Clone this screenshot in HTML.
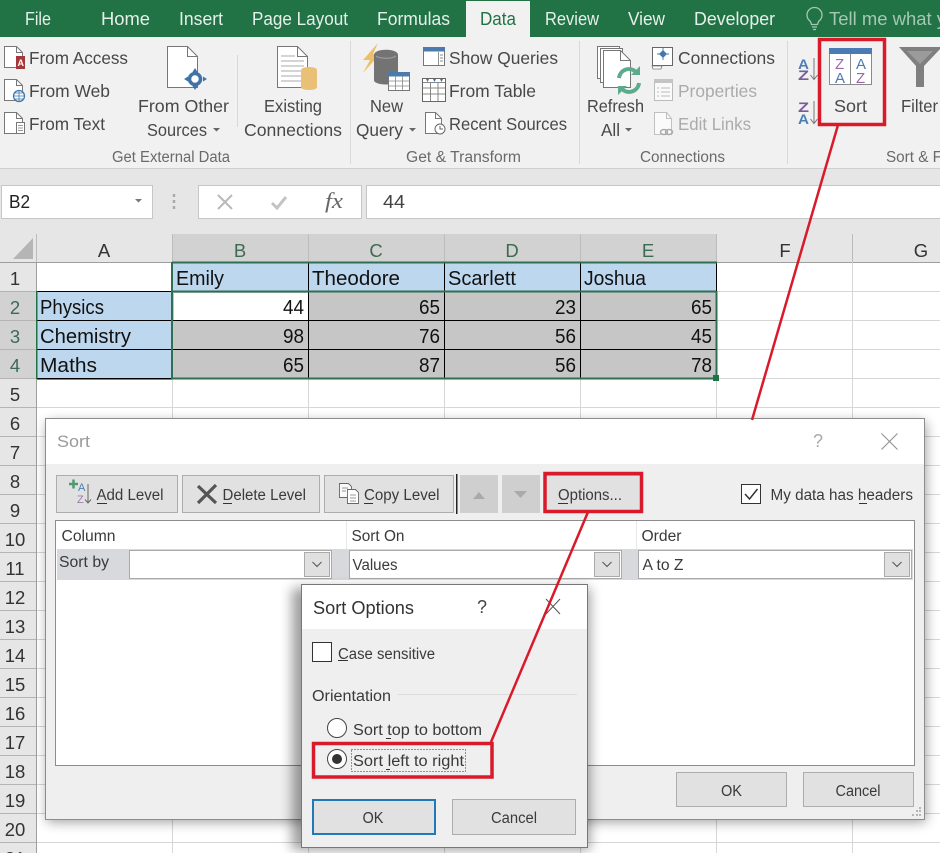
<!DOCTYPE html>
<html><head><meta charset="utf-8"><title>Excel Sort</title>
<style>
html,body{margin:0;padding:0;width:940px;height:853px;overflow:hidden;background:#fff}
svg{display:block;font-family:"Liberation Sans",sans-serif}
.tab{font-size:18px;fill:#e6f0ea}
.r{font-size:17.5px;fill:#484848}
.d{font-size:17.5px;fill:#ababab}
.g{font-size:15.500px;fill:#6a6a6a}
.hd{font-size:18.500px;fill:#333;text-anchor:middle}
.hs{font-size:18.500px;fill:#3d6a52;text-anchor:middle}
.c{font-size:20px;fill:#111}
.t{font-size:15.500px;fill:#3a3a3a}
.i{fill:#fff;stroke:#777;stroke-width:1}
</style></head><body>
<svg width="940" height="853" viewBox="0 0 940 853" xmlns="http://www.w3.org/2000/svg">
<defs>
<filter id="sh" x="-5%" y="-5%" width="110%" height="110%"><feGaussianBlur stdDeviation="6"/></filter>
</defs>

<!-- title bar -->
<rect width="940" height="37" fill="#217346"/>
<rect x="466" y="1" width="64" height="37" fill="#f1f1f1"/>
<g class="tab">
<text x="25" y="25" textLength="26" lengthAdjust="spacingAndGlyphs">File</text>
<text x="101" y="25" textLength="49" lengthAdjust="spacingAndGlyphs">Home</text>
<text x="179" y="25" textLength="44" lengthAdjust="spacingAndGlyphs">Insert</text>
<text x="252" y="25" textLength="96" lengthAdjust="spacingAndGlyphs">Page Layout</text>
<text x="377" y="25" textLength="73" lengthAdjust="spacingAndGlyphs">Formulas</text>
<text x="480" y="25" textLength="36" lengthAdjust="spacingAndGlyphs" style="fill:#217346">Data</text>
<text x="545" y="25" textLength="54" lengthAdjust="spacingAndGlyphs">Review</text>
<text x="628" y="25" textLength="37" lengthAdjust="spacingAndGlyphs">View</text>
<text x="694" y="25" textLength="81" lengthAdjust="spacingAndGlyphs">Developer</text>
<text x="829" y="25" textLength="117" lengthAdjust="spacingAndGlyphs" style="fill:#a5c8b3">Tell me what y</text>
</g>
<path d="M810 21a7.500 7.500 0 1 1 9 0c-1 1-1 2-1.500 3.500h-6c-.5-1.500-.5-2.500-1.500-3.500zM812 27h5M813 29.500h3" fill="none" stroke="#a5c8b3" stroke-width="1.300"/>

<!-- ribbon -->
<rect y="37" width="940" height="131" fill="#f1f1f1"/>
<rect y="168" width="940" height="1" fill="#cfcfcf"/>
<g fill="#d8d8d8"><rect x="237" y="55" width="1" height="72"/><rect x="350" y="41" width="1" height="123"/><rect x="579" y="41" width="1" height="123"/><rect x="787" y="41" width="1" height="123"/></g>

<g class="r">
<text x="29" y="64" textLength="99" lengthAdjust="spacingAndGlyphs">From Access</text>
<text x="29" y="97" textLength="81" lengthAdjust="spacingAndGlyphs">From Web</text>
<text x="29" y="130" textLength="76" lengthAdjust="spacingAndGlyphs">From Text</text>
<text x="138" y="112" textLength="91" lengthAdjust="spacingAndGlyphs">From Other</text>
<text x="147" y="136" textLength="60" lengthAdjust="spacingAndGlyphs">Sources</text>
<text x="264" y="112" textLength="58" lengthAdjust="spacingAndGlyphs">Existing</text>
<text x="244" y="136" textLength="98" lengthAdjust="spacingAndGlyphs">Connections</text>
<text x="370" y="112" textLength="33" lengthAdjust="spacingAndGlyphs">New</text>
<text x="356" y="136" textLength="47" lengthAdjust="spacingAndGlyphs">Query</text>
<text x="449" y="64" textLength="109" lengthAdjust="spacingAndGlyphs">Show Queries</text>
<text x="449" y="97" textLength="87" lengthAdjust="spacingAndGlyphs">From Table</text>
<text x="449" y="130" textLength="118" lengthAdjust="spacingAndGlyphs">Recent Sources</text>
<text x="587" y="112" textLength="57" lengthAdjust="spacingAndGlyphs">Refresh</text>
<text x="601" y="136" textLength="19" lengthAdjust="spacingAndGlyphs">All</text>
<text x="678" y="64" textLength="97" lengthAdjust="spacingAndGlyphs">Connections</text>
<text x="834" y="112" textLength="33" lengthAdjust="spacingAndGlyphs">Sort</text>
<text x="901" y="112" textLength="37" lengthAdjust="spacingAndGlyphs">Filter</text>
</g>
<g class="d">
<text x="678" y="97" textLength="79" lengthAdjust="spacingAndGlyphs">Properties</text>
<text x="678" y="130" textLength="73" lengthAdjust="spacingAndGlyphs">Edit Links</text>
</g>
<g class="g">
<text x="112" y="162" textLength="118" lengthAdjust="spacingAndGlyphs">Get External Data</text>
<text x="406" y="162" textLength="115" lengthAdjust="spacingAndGlyphs">Get &amp; Transform</text>
<text x="640" y="162" textLength="85" lengthAdjust="spacingAndGlyphs">Connections</text>
<text x="886" y="162" textLength="56" lengthAdjust="spacingAndGlyphs">Sort &amp; F</text>
</g>
<g fill="#666"><path d="M213 128h7l-3.500 3.500zM409 128h7l-3.500 3.500zM625 128h7l-3.500 3.500z"/></g>

<!-- left doc icons -->
<path class="i" d="M4.500 46.500h12l6 6v15h-18z"/><path d="M16.500 46.500v6h6" fill="none" stroke="#777"/>
<rect x="16" y="56" width="9" height="13" fill="#a4373a"/>
<text x="17.500" y="66" font-size="9" font-weight="bold" fill="#fff">A</text>
<path class="i" d="M4.500 79.500h12l6 6v15h-18z"/><path d="M16.500 79.500v6h6" fill="none" stroke="#777"/>
<circle cx="19" cy="96" r="5.500" fill="#fff" stroke="#3f78ad" stroke-width="1.300"/><path d="M13.500 96h11M19 90.500v11M15 93h8M15 99h8" stroke="#3f78ad" stroke-width=".8"/>
<path class="i" d="M4.500 112.500h12l6 6v15h-18z"/><path d="M16.500 112.500v6h6" fill="none" stroke="#777"/>
<rect x="16.500" y="122.500" width="8" height="11" fill="#fff" stroke="#777"/><path d="M18 125.500h5M18 128h5M18 130.500h5" stroke="#777" stroke-width=".8"/>

<!-- from other sources -->
<path class="i" d="M167.500 46.500h20l10 10v31h-30z"/><path d="M187.500 46.500v10h10" fill="none" stroke="#777"/>
<circle cx="195" cy="79" r="5.500" fill="#fff" stroke="#3f73a8" stroke-width="3.500"/>
<path d="M195 68l2.500 4h-5zM195 90l2.500-4h-5zM184 79l4-2.500v5zM207 79l-4-2.500v5z" fill="#3f73a8"/>

<!-- existing connections -->
<path class="i" d="M277.500 46.500h20l10 10v31h-30z"/><path d="M297.500 46.500v10h10" fill="none" stroke="#777"/>
<path d="M281 56h14M281 61h23M281 66h23M281 71h20M281 76h20M281 81h20" stroke="#aaa"/>
<path d="M301 70c0-4 16-4 16 0v17c0 4-16 4-16 0z" fill="#eac077"/>

<!-- new query -->
<path d="M378 43L363 60h7l-7 13 17-19h-7l5-11z" fill="#ecc06a"/>
<path d="M374 55c0-7 24-7 24 0v25c0 6-24 6-24 0z" fill="#737373"/>
<path d="M376 56c4 3 16 3 20 0" fill="none" stroke="#9a9a9a" stroke-width="1.200"/>
<rect x="388.500" y="72.500" width="21" height="18" fill="#fff" stroke="#777"/>
<rect x="388" y="72" width="22" height="4.500" fill="#4b7bac"/>
<path d="M389 81h20M389 86h20M395.500 76v14M402.500 76v14" stroke="#888" stroke-width=".8"/>

<!-- show queries -->
<rect x="423.500" y="47.500" width="21" height="18" fill="#fff" stroke="#777"/>
<rect x="423" y="47" width="22" height="4.500" fill="#4b7bac"/>
<path d="M438.500 52v13M440 55h3M440 58h3M440 61h3" stroke="#888" stroke-width=".9"/>
<!-- from table -->
<rect x="422.500" y="78.500" width="23" height="23" fill="#fff" stroke="#666"/>
<path d="M426 79h3l-1.500 3zM433 79h3l-1.500 3zM440 79h3l-1.500 3z" fill="#3f73a8"/>
<path d="M423 82.500h22M423 88h22M423 94h22M430.500 82v19M438 82v19" stroke="#888"/>
<!-- recent sources -->
<path class="i" d="M425.500 112.500h10l6 6v15h-16z"/><path d="M435.500 112.500v6h6" fill="none" stroke="#777"/>
<circle cx="440" cy="129" r="5" fill="#fff" stroke="#666"/><path d="M440 126v3h3" fill="none" stroke="#666"/>

<!-- refresh all -->
<path class="i" d="M597.500 46.500h22v32h-22z"/><path class="i" d="M600.500 48.500h22v34h-22z"/>
<path class="i" d="M603.500 50.500h17l10 10v27h-27z"/><path d="M620.500 50.500v10h10" fill="none" stroke="#777"/>
<path d="M619 78a10 10 0 0 1 17-6" fill="none" stroke="#5dab8d" stroke-width="4"/><path d="M640 66v9h-9z" fill="#5dab8d"/>
<path d="M639 83a10 10 0 0 1-17 6" fill="none" stroke="#5dab8d" stroke-width="4"/><path d="M618 95v-9h9z" fill="#5dab8d"/>

<!-- connections -->
<rect x="652.500" y="47.500" width="20" height="18" fill="#fff" stroke="#666"/>
<path d="M663 50l4 4-4 4-4-4z" fill="#3f78ad"/><path d="M663 48v12M657 54h12" stroke="#3f78ad" stroke-width=".9"/>
<path d="M652 66h10l-1 3h-8z" fill="#fff" stroke="#777" stroke-width=".8"/>
<!-- properties -->
<rect x="654.500" y="79.500" width="18" height="21" fill="#fafafa" stroke="#bbb"/><rect x="654" y="79" width="19" height="4" fill="#c4c4c4"/>
<path d="M661 88h9M661 92h9M661 96h9M657 88h2M657 92h2M657 96h2" stroke="#bbb"/>
<!-- edit links -->
<path d="M654.500 112.500h12l5 6v16h-17z" fill="#fafafa" stroke="#c0c0c0"/><path d="M666.500 112.500v6h5" fill="none" stroke="#c0c0c0"/>
<ellipse cx="664" cy="132" rx="3.500" ry="2.500" fill="none" stroke="#aaa" stroke-width="1.500"/><ellipse cx="669" cy="132" rx="3.500" ry="2.500" fill="none" stroke="#aaa" stroke-width="1.500"/>

<!-- sort az -->
<g font-size="13.500" font-weight="bold">
<text x="798" y="69" fill="#4c7fb3" textLength="11" lengthAdjust="spacingAndGlyphs">A</text>
<text x="798" y="80" fill="#7b5a9c" textLength="11" lengthAdjust="spacingAndGlyphs">Z</text>
<text x="798" y="112" fill="#7b5a9c" textLength="11" lengthAdjust="spacingAndGlyphs">Z</text>
<text x="798" y="124" fill="#4c7fb3" textLength="11" lengthAdjust="spacingAndGlyphs">A</text>
</g>
<path d="M814 58v21M810.500 75l3.500 4.500 3.500-4.500M814 101v22M810.500 119l3.500 4.500 3.500-4.500" fill="none" stroke="#777"/>

<!-- sort icon -->
<rect x="829.500" y="48.500" width="42" height="36" fill="#fff" stroke="#8a8a8a"/>
<rect x="829" y="48" width="43" height="6" fill="#4b7bb5"/>
<rect x="850" y="54" width="1" height="31" fill="#8a8a8a"/>
<g font-size="15">
<text x="835" y="69" fill="#9a6aa6">Z</text><text x="835" y="83" fill="#4b7bb5">A</text>
<text x="856" y="69" fill="#4b7bb5">A</text><text x="856" y="83" fill="#9a6aa6">Z</text>
</g>

<!-- filter -->
<path d="M899 47H942L924 66V87H916V66Z" fill="#7f7f7f"/>
<path d="M907 51h26l-13 13z" fill="#9b9b9b"/>

<!-- formula bar -->
<rect y="169" width="940" height="65" fill="#e6e6e6"/>
<rect x="1.500" y="185.500" width="151" height="33" fill="#fff" stroke="#c6c6c6"/>
<rect x="198.500" y="185.500" width="163" height="33" fill="#fff" stroke="#c6c6c6"/>
<rect x="366.500" y="185.500" width="580" height="33" fill="#fff" stroke="#c6c6c6"/>
<text x="9" y="208" font-size="18.500" fill="#222" textLength="21" lengthAdjust="spacingAndGlyphs">B2</text>
<path d="M135 199h7l-3.500 3.500z" fill="#777"/>
<path d="M174 194v3M174 200v3M174 206v3" stroke="#aaa" stroke-width="2.500"/>
<path d="M218 195l14 14M232 195l-14 14" stroke="#b9b9b9" stroke-width="2"/>
<path d="M272 203l5 5 9-11" fill="none" stroke="#c4c4c4" stroke-width="3"/>
<text x="325" y="208" font-family="Liberation Serif" font-style="italic" font-size="22" fill="#666" textLength="18" lengthAdjust="spacingAndGlyphs">fx</text>
<text x="383" y="208" font-size="18.500" fill="#444" textLength="22" lengthAdjust="spacingAndGlyphs">44</text>

<!-- column headers -->
<rect y="234" width="940" height="28" fill="#e6e6e6"/>
<rect x="172" y="234" width="544" height="28" fill="#d2d2d2"/>
<rect y="262" width="940" height="1" fill="#9e9e9e"/>
<path d="M33 238v21H13z" fill="#b5b5b5"/>
<g fill="#bcbcbc"><rect x="36" y="234" width="1" height="28"/><rect x="172" y="234" width="1" height="28"/><rect x="308" y="234" width="1" height="28"/><rect x="444" y="234" width="1" height="28"/><rect x="580" y="234" width="1" height="28"/><rect x="716" y="234" width="1" height="28"/><rect x="852" y="234" width="1" height="28"/></g>
<text class="hd" x="104" y="257">A</text><text class="hs" x="240" y="257">B</text><text class="hs" x="376" y="257">C</text><text class="hs" x="512" y="257">D</text><text class="hs" x="648" y="257">E</text><text class="hd" x="785" y="257">F</text><text class="hd" x="921" y="257">G</text>

<!-- grid -->
<g fill="#d6d6d6">
<rect x="36" y="291" width="904" height="1"/><rect x="36" y="320" width="904" height="1"/><rect x="36" y="349" width="904" height="1"/><rect x="36" y="378" width="904" height="1"/><rect x="36" y="407" width="904" height="1"/><rect x="36" y="436" width="904" height="1"/><rect x="36" y="465" width="904" height="1"/><rect x="36" y="494" width="904" height="1"/><rect x="36" y="523" width="904" height="1"/><rect x="36" y="552" width="904" height="1"/><rect x="36" y="581" width="904" height="1"/><rect x="36" y="610" width="904" height="1"/><rect x="36" y="639" width="904" height="1"/><rect x="36" y="668" width="904" height="1"/><rect x="36" y="697" width="904" height="1"/><rect x="36" y="726" width="904" height="1"/><rect x="36" y="755" width="904" height="1"/><rect x="36" y="784" width="904" height="1"/><rect x="36" y="813" width="904" height="1"/><rect x="36" y="842" width="904" height="1"/>
<rect x="172" y="262" width="1" height="591"/><rect x="308" y="262" width="1" height="591"/><rect x="444" y="262" width="1" height="591"/><rect x="580" y="262" width="1" height="591"/><rect x="716" y="262" width="1" height="591"/><rect x="852" y="262" width="1" height="591"/>
</g>

<!-- row headers -->
<rect y="263" width="36" height="590" fill="#e6e6e6"/>
<rect y="291" width="36" height="87" fill="#d2d2d2"/>
<rect x="36" y="262" width="1" height="591" fill="#9e9e9e"/>
<g fill="#b4b4b4">
<rect y="291" width="36" height="1"/><rect y="320" width="36" height="1"/><rect y="349" width="36" height="1"/><rect y="378" width="36" height="1"/><rect y="407" width="36" height="1"/><rect y="436" width="36" height="1"/><rect y="465" width="36" height="1"/><rect y="494" width="36" height="1"/><rect y="523" width="36" height="1"/><rect y="552" width="36" height="1"/><rect y="581" width="36" height="1"/><rect y="610" width="36" height="1"/><rect y="639" width="36" height="1"/><rect y="668" width="36" height="1"/><rect y="697" width="36" height="1"/><rect y="726" width="36" height="1"/><rect y="755" width="36" height="1"/><rect y="784" width="36" height="1"/><rect y="813" width="36" height="1"/><rect y="842" width="36" height="1"/>
</g>
<text class="hd" x="15" y="285">1</text><text class="hs" x="15" y="314">2</text><text class="hs" x="15" y="343">3</text><text class="hs" x="15" y="372">4</text><text class="hd" x="15" y="401">5</text><text class="hd" x="15" y="430">6</text><text class="hd" x="15" y="459">7</text><text class="hd" x="15" y="488">8</text><text class="hd" x="15" y="517">9</text>
<text class="hd" x="15" y="546">10</text><text class="hd" x="15" y="575">11</text><text class="hd" x="15" y="604">12</text><text class="hd" x="15" y="633">13</text><text class="hd" x="15" y="662">14</text><text class="hd" x="15" y="691">15</text><text class="hd" x="15" y="720">16</text><text class="hd" x="15" y="749">17</text><text class="hd" x="15" y="778">18</text><text class="hd" x="15" y="807">19</text><text class="hd" x="15" y="836">20</text><text class="hd" x="15" y="865">21</text>

<!-- cells -->
<rect x="173" y="263" width="543" height="28" fill="#bdd7ee"/>
<rect x="37" y="292" width="135" height="86" fill="#bdd7ee"/>
<rect x="173" y="292" width="543" height="86" fill="#c6c6c6"/>
<rect x="174" y="293" width="134" height="27" fill="#fff"/>
<g fill="#000">
<rect x="37" y="320" width="679" height="1"/><rect x="37" y="349" width="679" height="1"/><rect x="37" y="378" width="136" height="1.500"/><rect x="37" y="291" width="136" height="1"/>
<rect x="308" y="263" width="1" height="115"/><rect x="444" y="263" width="1" height="115"/><rect x="580" y="263" width="1" height="115"/><rect x="716" y="263" width="1" height="28"/>
</g>
<rect x="36" y="291" width="1.500" height="88" fill="#217346"/>
<path d="M172 262.500H717M172 291.500H716M172 378.500H716" stroke="#2f6f52" stroke-width="2" fill="none"/>
<path d="M172 262V379M716.500 291V379" stroke="#2f6f52" stroke-width="2" fill="none"/>
<path d="M174 379.800H714" stroke="#fff" stroke-width="0"/>
<rect x="713" y="375" width="6" height="6" fill="#217346"/>
<g class="c">
<text x="176" y="285" textLength="48" lengthAdjust="spacingAndGlyphs">Emily</text>
<text x="312" y="285" textLength="88" lengthAdjust="spacingAndGlyphs">Theodore</text>
<text x="448" y="285" textLength="68" lengthAdjust="spacingAndGlyphs">Scarlett</text>
<text x="584" y="285" textLength="62" lengthAdjust="spacingAndGlyphs">Joshua</text>
<text x="40" y="314" textLength="64" lengthAdjust="spacingAndGlyphs">Physics</text>
<text x="40" y="343" textLength="91" lengthAdjust="spacingAndGlyphs">Chemistry</text>
<text x="40" y="372" textLength="57" lengthAdjust="spacingAndGlyphs">Maths</text>
<text x="283" y="314" textLength="21" lengthAdjust="spacingAndGlyphs">44</text>
<text x="419" y="314" textLength="21" lengthAdjust="spacingAndGlyphs">65</text>
<text x="555" y="314" textLength="21" lengthAdjust="spacingAndGlyphs">23</text>
<text x="691" y="314" textLength="21" lengthAdjust="spacingAndGlyphs">65</text>
<text x="283" y="343" textLength="21" lengthAdjust="spacingAndGlyphs">98</text>
<text x="419" y="343" textLength="21" lengthAdjust="spacingAndGlyphs">76</text>
<text x="555" y="343" textLength="21" lengthAdjust="spacingAndGlyphs">56</text>
<text x="691" y="343" textLength="21" lengthAdjust="spacingAndGlyphs">45</text>
<text x="283" y="372" textLength="21" lengthAdjust="spacingAndGlyphs">65</text>
<text x="419" y="372" textLength="21" lengthAdjust="spacingAndGlyphs">87</text>
<text x="555" y="372" textLength="21" lengthAdjust="spacingAndGlyphs">56</text>
<text x="691" y="372" textLength="21" lengthAdjust="spacingAndGlyphs">78</text>
</g>

<!-- Sort dialog -->
<rect x="47" y="422" width="879" height="400" fill="#000" opacity=".38" filter="url(#sh)"/>
<rect x="45.500" y="418.500" width="879" height="401" fill="#efefef" stroke="#8c8c8c"/>
<rect x="46" y="419" width="878" height="45" fill="#fff"/>
<text x="57" y="447" font-size="17" fill="#9a9a9a" textLength="33" lengthAdjust="spacingAndGlyphs">Sort</text>
<text x="813" y="447" font-size="18" fill="#aaa">?</text>
<path d="M881.500 433.500l16 16M897.500 433.500l-16 16" stroke="#8f8f8f" stroke-width="1"/>

<g fill="#e1e1e1" stroke="#adadad">
<rect x="56.500" y="475.500" width="121" height="37"/><rect x="182.500" y="475.500" width="137" height="37"/><rect x="324.500" y="475.500" width="129" height="37"/><rect x="544.500" y="475.500" width="98" height="37"/>
</g>
<rect x="456" y="474" width="1.500" height="40" fill="#222"/>
<rect x="460" y="475" width="38" height="38" fill="#cfcfcf"/><rect x="502" y="475" width="38" height="38" fill="#cfcfcf"/>
<path d="M473 499l6-7 6 7zM514 491h13l-6.500 7z" fill="#aaa"/>
<g class="t">
<text x="96.500" y="500" textLength="67" lengthAdjust="spacingAndGlyphs">Add Level</text>
<text x="222.500" y="500" textLength="83.500" lengthAdjust="spacingAndGlyphs">Delete Level</text>
<text x="364" y="500" textLength="75.500" lengthAdjust="spacingAndGlyphs">Copy Level</text>
<text x="558" y="500" textLength="64" lengthAdjust="spacingAndGlyphs">Options...</text>
<text x="770.500" y="500" textLength="142.500" lengthAdjust="spacingAndGlyphs">My data has headers</text>
</g>
<g fill="#333"><rect x="97" y="503" width="10" height="1"/><rect x="223" y="503" width="9" height="1"/><rect x="364" y="503" width="9" height="1"/><rect x="558" y="503" width="10" height="1"/><rect x="859" y="503" width="8" height="1"/></g>

<!-- button icons -->
<path d="M69 484h9M73.500 479.500v9" stroke="#4f9a70" stroke-width="2.500"/>
<text x="78" y="491" font-size="11" fill="#4c7fb3">A</text><text x="77" y="503" font-size="11" fill="#9a7ab0">Z</text>
<path d="M88 484v19M85 499.500l3 3.500 3-3.500" fill="none" stroke="#666"/>
<path d="M198 486l18 17M216 485l-18 18" stroke="#555" stroke-width="3.200"/>
<path d="M339.500 483.500h9l3 3v11h-12z" fill="#fafafa" stroke="#666" stroke-width=".9"/>
<path d="M347.500 489.500h8l3 3v11h-11z" fill="#fff" stroke="#666" stroke-width=".9"/>
<path d="M342 488h6M342 491h4M350 495h6M350 498h6M350 501h6" stroke="#777" stroke-width=".8"/>

<!-- checkbox -->
<rect x="741.500" y="484.500" width="19" height="19" fill="#fff" stroke="#333"/>
<path d="M745 494l4.500 5 8-10" fill="none" stroke="#333" stroke-width="1.500"/>

<!-- list box -->
<rect x="55.500" y="520.500" width="859" height="245" fill="#fff" stroke="#8c8c8c"/>
<rect x="346" y="521" width="1" height="28" fill="#e8e8e8"/><rect x="636" y="521" width="1" height="28" fill="#e8e8e8"/>
<g class="t">
<text x="61.500" y="541" textLength="54" lengthAdjust="spacingAndGlyphs">Column</text>
<text x="351.500" y="541" textLength="53" lengthAdjust="spacingAndGlyphs">Sort On</text>
<text x="641.500" y="541" textLength="40" lengthAdjust="spacingAndGlyphs">Order</text>
</g>
<rect x="57" y="549" width="856" height="31" fill="#d7d9dc"/>
<g fill="#fff" stroke="#aaa">
<rect x="129.500" y="550.500" width="202" height="28"/><rect x="349.500" y="550.500" width="272" height="28"/><rect x="638.500" y="550.500" width="273" height="28"/>
</g>
<g fill="#e0e0e0" stroke="#aaa">
<rect x="304.500" y="552.500" width="25" height="24"/><rect x="594.500" y="552.500" width="25" height="24"/><rect x="884.500" y="552.500" width="25" height="24"/>
</g>
<path d="M312.500 562l4.500 4.500 4.500-4.500M602.500 562l4.500 4.500 4.500-4.500M892.500 562l4.500 4.500 4.500-4.500" fill="none" stroke="#555"/>
<g class="t">
<text x="59" y="567" textLength="50" lengthAdjust="spacingAndGlyphs">Sort by</text>
<text x="352.500" y="570" textLength="45" lengthAdjust="spacingAndGlyphs">Values</text>
<text x="642.500" y="570" textLength="41" lengthAdjust="spacingAndGlyphs">A to Z</text>
</g>

<!-- bottom buttons -->
<g fill="#e1e1e1" stroke="#adadad"><rect x="676.500" y="772.500" width="110" height="34"/><rect x="803.500" y="772.500" width="110" height="34"/></g>
<g class="t">
<text x="721" y="796" textLength="21" lengthAdjust="spacingAndGlyphs">OK</text>
<text x="835.500" y="796" textLength="45" lengthAdjust="spacingAndGlyphs">Cancel</text>
</g>
<g fill="#b5b5b5"><rect x="919" y="807" width="2" height="2"/><rect x="916" y="810" width="2" height="2"/><rect x="919" y="810" width="2" height="2"/><rect x="912" y="814" width="2" height="2"/><rect x="916" y="814" width="2" height="2"/><rect x="919" y="814" width="2" height="2"/></g>

<!-- Sort Options dialog -->
<rect x="292" y="588" width="298" height="262" fill="#000" opacity=".38" filter="url(#sh)"/>
<rect x="301.500" y="584.500" width="286" height="263" fill="#efefef" stroke="#777"/>
<rect x="302" y="585" width="285" height="44" fill="#fff"/>
<text x="313" y="614" font-size="18" fill="#333" textLength="101" lengthAdjust="spacingAndGlyphs">Sort Options</text>
<text x="477" y="613" font-size="18" fill="#444">?</text>
<path d="M546 599l14 15M560 599l-14 15" stroke="#555" stroke-width="1"/>
<rect x="312.500" y="642.500" width="19" height="19" fill="#fff" stroke="#333"/>
<g class="t">
<text x="338" y="659" textLength="97" lengthAdjust="spacingAndGlyphs">Case sensitive</text>
<text x="312" y="701" textLength="79" lengthAdjust="spacingAndGlyphs">Orientation</text>
<text x="353" y="735" textLength="129" lengthAdjust="spacingAndGlyphs">Sort top to bottom</text>
<text x="353" y="766" textLength="111" lengthAdjust="spacingAndGlyphs">Sort left to right</text>
</g>
<g fill="#333"><rect x="338" y="660" width="10" height="1"/><rect x="386" y="738" width="5" height="1"/><rect x="386" y="769" width="4" height="1"/></g>
<rect x="398" y="694" width="179" height="1" fill="#dcdcdc"/>
<circle cx="337" cy="728" r="9.500" fill="#fff" stroke="#444"/>
<circle cx="337" cy="759" r="9.500" fill="#fff" stroke="#444"/>
<circle cx="337" cy="759" r="5" fill="#333"/>
<rect x="351.500" y="749.500" width="114" height="22" fill="none" stroke="#333" stroke-dasharray="1 2"/>
<rect x="313" y="800" width="122" height="34" fill="#e1e1e1" stroke="#1f7ab5" stroke-width="2"/>
<rect x="452.500" y="799.500" width="123" height="35" fill="#e1e1e1" stroke="#adadad"/>
<g class="t">
<text x="362.500" y="823" textLength="21" lengthAdjust="spacingAndGlyphs">OK</text>
<text x="491" y="823" textLength="46" lengthAdjust="spacingAndGlyphs">Cancel</text>
</g>

<!-- red annotations -->
<g fill="none" stroke="#d91a2a">
<rect x="819.500" y="39.500" width="65" height="85" stroke-width="3.500"/>
<rect x="545" y="473.500" width="96.500" height="38" stroke-width="3.500"/>
<rect x="313.500" y="743.500" width="178.500" height="33.500" stroke-width="3.500"/>
<path d="M838 125L752 420M588 512L491 742" stroke-width="2.500"/>
</g>
</svg>
</body></html>
